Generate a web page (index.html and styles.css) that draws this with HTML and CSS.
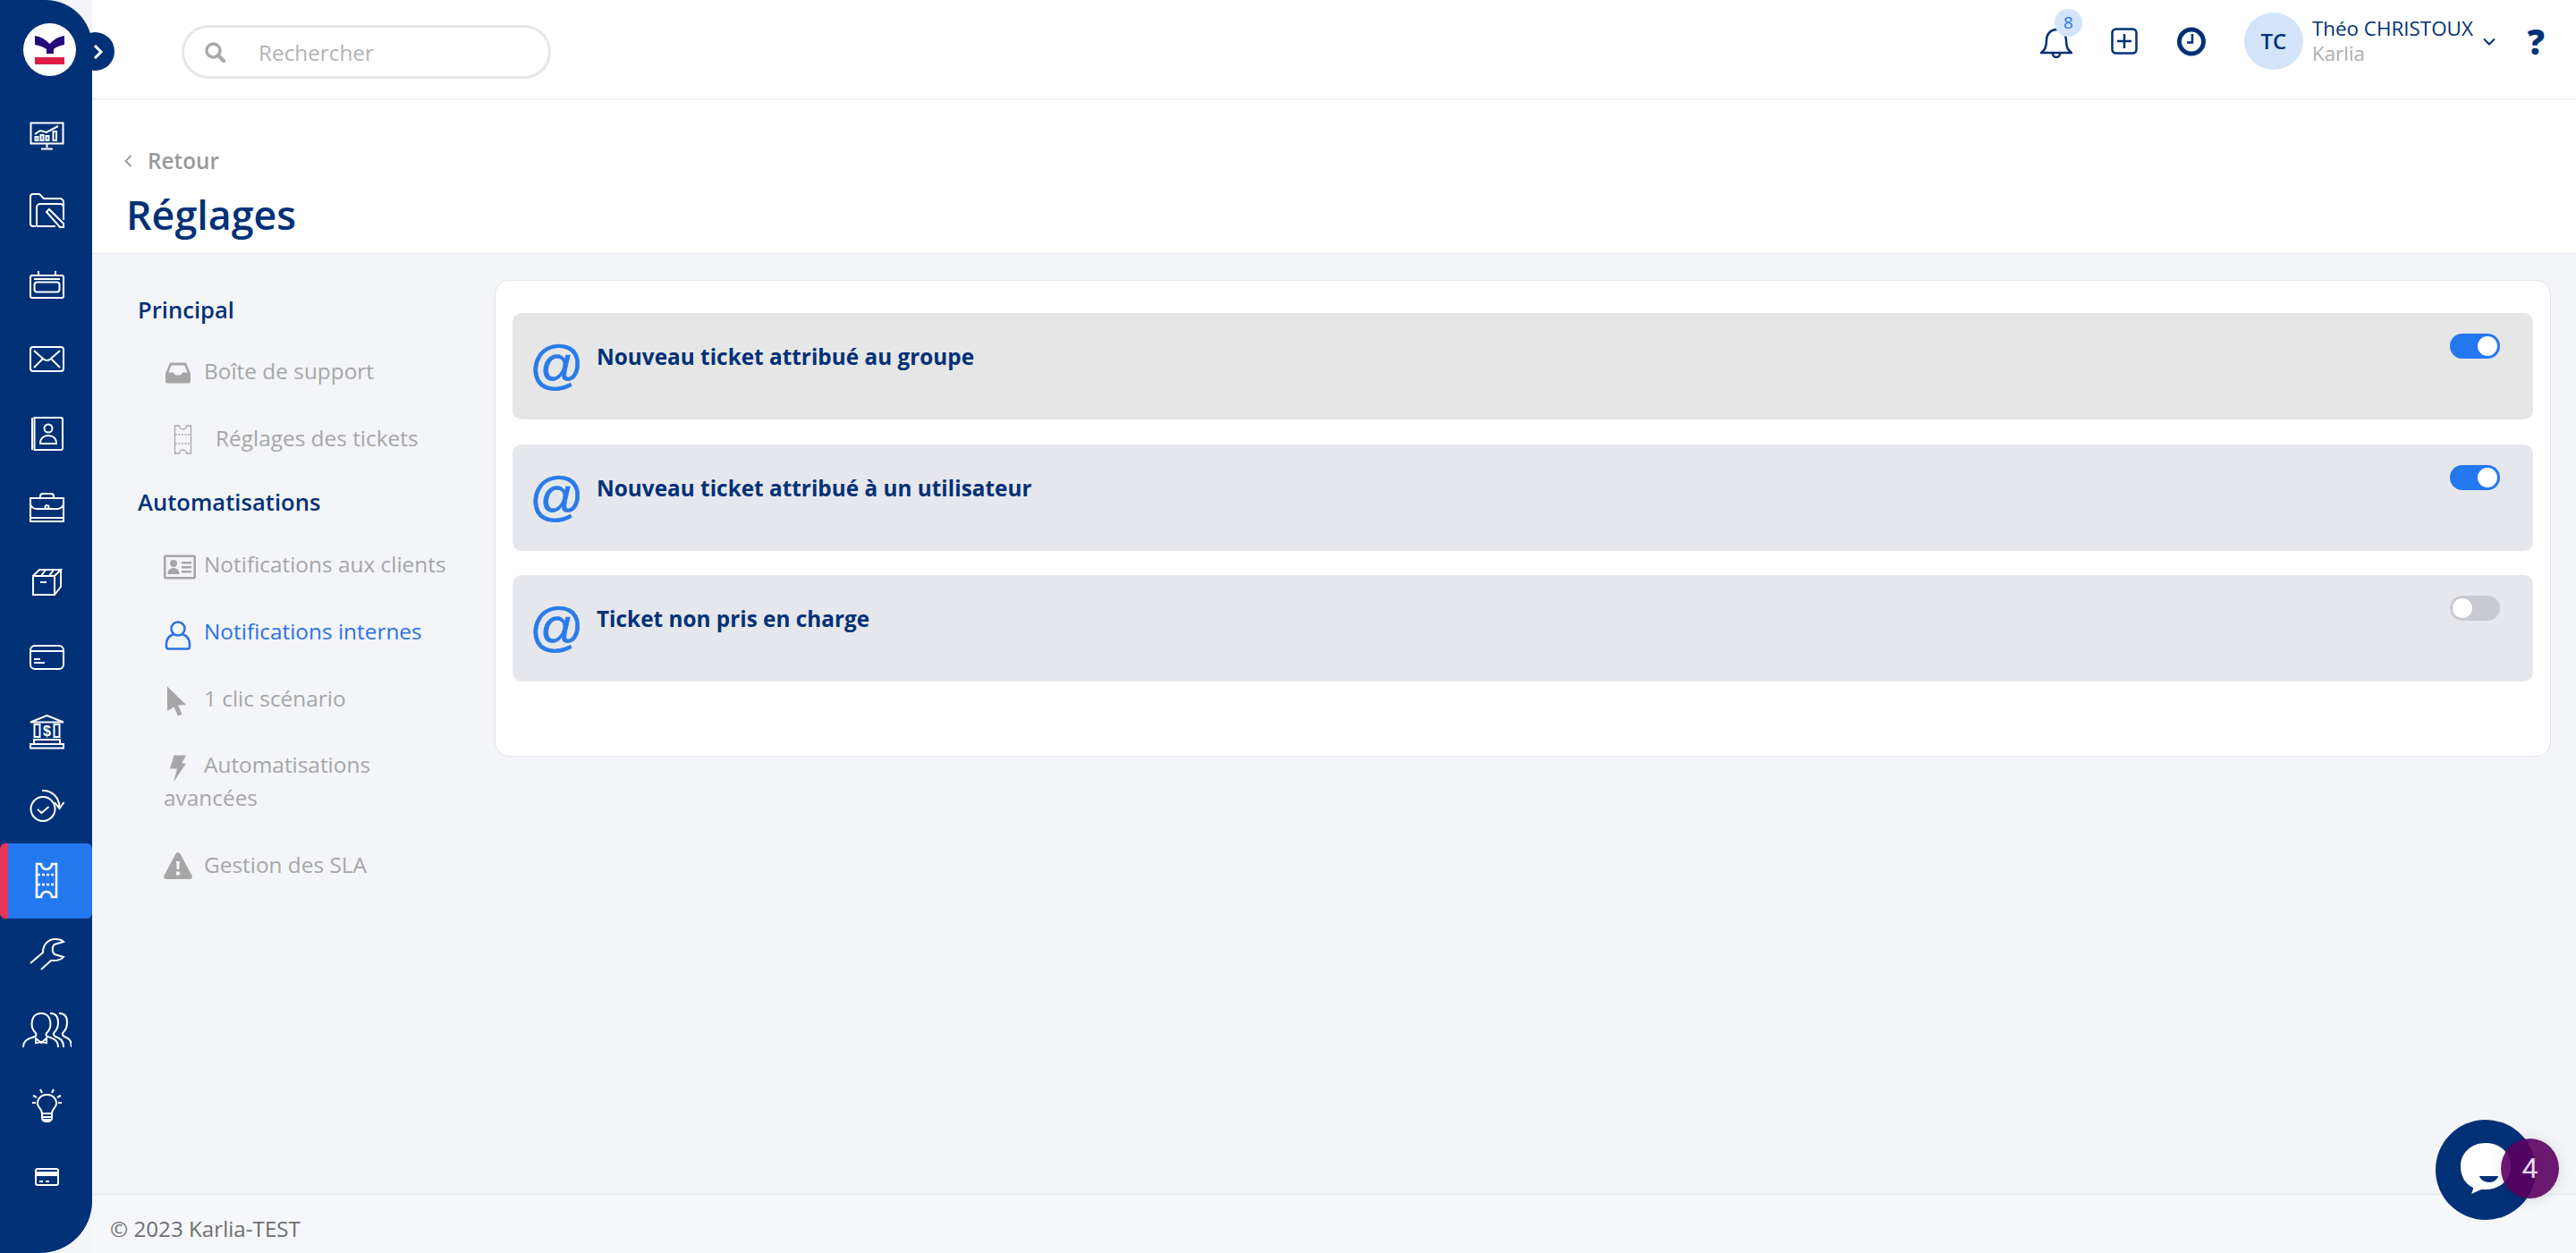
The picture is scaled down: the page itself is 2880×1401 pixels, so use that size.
FILE: index.html
```html
<!DOCTYPE html>
<html lang="fr">
<head>
  <meta charset="UTF-8">
  <title>Réglages</title>
  <link rel="stylesheet" href="styles.css">
</head>
<body>
  <div class="app">
    <!-- Main sidebar -->
    <aside class="sidebar">
      <div class="logo">
        <svg width="59" height="59" viewBox="0 0 59 59">
          <path fill="#24097c" d="M13 14 Q22 15 29.500 23 Q37 15 46 14 V24 Q37 26 34 29 V34 H26 V29 Q22 26 13 24 Z"/>
          <rect fill="#e01e45" x="13" y="38" width="33" height="8"/>
        </svg>
      </div>
      <nav class="side-nav">
        <a class="side-item" href="#"><svg class="side-icon" viewBox="0 0 56 44"><rect x="10.500" y="7.500" width="36" height="23"/><path d="M28.500 31v4M22 36.500h13M15 20l6-4 7 2 13-7"/><rect x="15.500" y="23" width="3" height="4"/><rect x="21.500" y="21" width="3" height="6"/><rect x="27.500" y="22" width="3" height="5"/><rect x="35.500" y="17" width="3.500" height="10"/></svg></a>
        <a class="side-item" href="#"><svg class="side-icon" viewBox="0 0 56 44"><path d="M16 40h-3a3 3 0 0 1-3-3V7a3 3 0 0 1 3-3h7l5 5h18a4 4 0 0 1 4 4v20"/><path d="M17 40H20M17 40V19a4 4 0 0 1 4-4h22a4 4 0 0 1 4 4v13M20 40h18"/><path d="M28 24l3-3 16 16v4h-4z"/></svg></a>
        <a class="side-item" href="#"><svg class="side-icon" viewBox="0 0 56 44"><rect x="10" y="12" width="37" height="25" rx="2"/><path d="M19 7v6M38 7v6M14 16h29"/><rect x="14.500" y="19.500" width="28" height="11" rx="3"/></svg></a>
        <a class="side-item" href="#"><svg class="side-icon" viewBox="0 0 56 44"><rect x="10" y="8" width="37" height="27" rx="3"/><path d="M14 12l10 9q4.500 4 9 0l10-9M14 31l10-10M43 31L33 21"/></svg></a>
        <a class="side-item" href="#"><svg class="side-icon" viewBox="0 0 56 44"><path d="M12 4v36M14.500 4H44a2 2 0 0 1 2 2v32a2 2 0 0 1-2 2H14.500z"/><circle cx="30" cy="16" r="4.500"/><path d="M21 33c0-6 4-9 9-9s9 3 9 9z"/></svg></a>
        <a class="side-item" href="#"><svg class="side-icon" viewBox="0 0 56 44"><rect x="10" y="11" width="37" height="26"/><path d="M21 11V9a3 3 0 0 1 3-3h9a3 3 0 0 1 3 3v2M10 18q2 5 7 5h23q5 0 7-5M10 33h37"/><circle cx="28.500" cy="21" r="2"/></svg></a>
        <a class="side-item" href="#"><svg class="side-icon" viewBox="0 0 56 44"><rect x="13" y="14" width="24" height="21"/><path d="M13 14l7-7h24l-7 7M44 7v19l-7 9M27 7l-5 7M36 7l-5 7M21 21h7"/></svg></a>
        <a class="side-item" href="#"><svg class="side-icon" viewBox="0 0 56 44"><rect x="10" y="9" width="37" height="26" rx="5"/><path d="M10 15h37M14 24h7M14 28h12"/></svg></a>
        <a class="side-item" href="#"><svg class="side-icon" viewBox="0 0 56 44"><path d="M10 11.500L28.500 4 47 11.500z"/><rect x="14.500" y="14" width="6" height="14"/><rect x="36.500" y="14" width="6" height="14"/><path d="M14 31h29v5H14zM10 36h37v4.500H10z"/><text class="bank-sign" x="28.500" y="27" text-anchor="middle">$</text></svg></a>
        <a class="side-item" href="#"><svg class="side-icon" viewBox="0 0 56 44"><circle cx="24" cy="24.500" r="13.500"/><path d="M18 25l4.500 4 8-7M23 4c10-1 19 7 19.500 18M37 17l5.500 7 5-7"/></svg></a>
        <a class="side-item side-item-active" href="#"><svg class="side-icon side-icon-bold" viewBox="0 0 56 44"><path d="M17 3h5a6 6 0 0 0 12 0h5v37h-5a6 6 0 0 0-12 0h-5z"/><path stroke-dasharray="3 2" d="M18 15h20M18 26h20"/></svg></a>
        <a class="side-item" href="#"><svg class="side-icon" viewBox="0 0 56 44"><path d="M10 31l14-12C24 10 30 4 38 4c4 0 7 1 9 3l-10 3c-3 2-3 9 0 11l10 3c-4 5-11 4-14 4L22 38"/></svg></a>
        <a class="side-item" href="#"><svg class="side-icon" viewBox="0 0 56 44"><path d="M2 41c0-8 6-10 13-12 2-1 2-3 0-5-3-3-4-8-3-13 1-5 5-8 10-8s9 3 10 8c1 5 0 10-3 13-2 2-2 4 0 5 7 2 12 4 12 12"/><path d="M16 31l6 5 6-5v5l-6-1-6 1zM32 3c6 0 9 4 9 10 0 5-2 9-4 11-2 2-1 4 1 5 5 2 9 4 9 12M42 3c6 0 9 4 9 10 0 5-2 9-4 11-2 2-1 4 1 5 5 2 8 4 8 12"/></svg></a>
        <a class="side-item" href="#"><svg class="side-icon" viewBox="0 0 56 44"><path d="M23 32c0-4-3-6-4-8-3-5 1-13 9.500-13S41 19 38 24c-1 2-4 4-4 8zM23 32v5q0 4 5.500 4T34 37v-5M23 36h11M24 39h9M21 5l2 4M36 5l-2 4M13 12l4 2M44 12l-4 2M12 20h4M41 20h4"/></svg></a>
        <a class="side-item" href="#"><svg class="side-icon" viewBox="0 0 56 44"><rect x="16" y="11" width="25" height="18" rx="2"/><rect class="side-fill" x="16" y="15" width="25" height="3"/><path d="M20 25h4M27 25h4"/></svg></a>
      </nav>
    </aside>
    <button class="side-toggle" type="button">
      <svg width="12" height="18" viewBox="0 0 12 18"><path d="M2 2l7 7-7 7" fill="none" stroke="#fff" stroke-width="3"/></svg>
    </button>

    <div class="main">
      <!-- Top bar -->
      <header class="topbar">
        <div class="search">
          <svg class="search-icon" width="23" height="23" viewBox="0 0 23 23"><circle cx="9.500" cy="9.500" r="7.500" fill="none" stroke="#aaa" stroke-width="3.500"/><path d="M15 15l6 6" stroke="#aaa" stroke-width="4.500" stroke-linecap="round"/></svg>
          <span class="search-text">Rechercher</span>
        </div>
        <div class="top-actions">
          <div class="bell">
            <svg width="36" height="36" viewBox="0 0 36 36" fill="none" stroke="#003177" stroke-width="2.500"><path d="M1 30h34c-4-3-6-6-6-14 0-7-5-12-11-12S7 9 7 16c0 8-2 11-6 14z" stroke-linejoin="round"/><path d="M14 31a4 4 0 0 0 8 0" /></svg>
            <span class="bell-count">8</span>
          </div>
          <svg class="top-plus" width="30" height="30" viewBox="0 0 30 30" fill="none" stroke="#003177" stroke-width="2.500"><rect x="1.500" y="1.500" width="27" height="27" rx="4"/><path d="M15 7v16M7 15h16"/></svg>
          <svg class="top-clock" width="32" height="33" viewBox="0 0 32 33" fill="none" stroke="#003177"><circle cx="16" cy="16.500" r="13.500" stroke-width="5"/><path d="M17 8v9.500h-6" stroke-width="2.500"/></svg>
          <div class="avatar">TC</div>
          <div class="user">
            <div class="user-name">Théo CHRISTOUX</div>
            <div class="user-org">Karlia</div>
          </div>
          <svg class="user-caret" width="14" height="9" viewBox="0 0 14 9"><path d="M1 1.500l6 6 6-6" fill="none" stroke="#003177" stroke-width="2"/></svg>
          <span class="help">?</span>
        </div>
      </header>

      <!-- Page title -->
      <div class="page-head">
        <a class="back-link" href="#">
          <svg width="9" height="14" viewBox="0 0 9 14"><path d="M7.500 1L1.500 7l6 6" fill="none" stroke="#999" stroke-width="1.800"/></svg>
          Retour
        </a>
        <h1 class="page-title">Réglages</h1>
      </div>

      <div class="content">
        <!-- Settings menu -->
        <nav class="settings-nav">
          <h3 class="settings-group">Principal</h3>
          <a class="settings-link" href="#"><svg class="settings-icon" viewBox="0 0 36 34"><path fill-rule="evenodd" d="M7 5.500h18l5 12v9a2 2 0 0 1-2 2H4a2 2 0 0 1-2-2v-9zM8.500 8.500l-3 8H11l2 3h6l2-3h5.500l-3-8z"/></svg>Boîte de support</a>
          <a class="settings-link settings-link-wide" href="#"><svg class="settings-icon settings-icon-line" viewBox="0 0 36 34"><path d="M12.500 1h5a4 4 0 0 0 8 0h5v31h-5a4 4 0 0 0-8 0h-5z"/><path stroke-dasharray="2 1.500" d="M13 11h17M13 21h17"/></svg>Réglages des tickets</a>

          <h3 class="settings-group">Automatisations</h3>
          <a class="settings-link" href="#"><svg class="settings-icon" viewBox="0 0 36 34"><path fill-rule="evenodd" d="M2 3.500h32a2 2 0 0 1 2 2v23a2 2 0 0 1-2 2H2a2 2 0 0 1-2-2v-23a2 2 0 0 1 2-2zM2.500 6v22h31V6z"/><circle cx="11" cy="13" r="4"/><path d="M4.500 25c0-5 3-7 6.500-7s6.500 2 6.500 7zM20 11h11v2.500H20zM20 16h11v2.500H20zM20 21h11v2.500H20z"/></svg>Notifications aux clients</a>
          <a class="settings-link settings-link-active" href="#"><svg class="settings-icon settings-icon-user" viewBox="0 0 36 34"><circle cx="16" cy="11" r="7.500"/><path d="M11 17C6 19 3 23 3 28v3a2.500 2.500 0 0 0 2.500 2.500h21A2.500 2.500 0 0 0 29 31v-3c0-5-3-9-8-11"/></svg>Notifications internes</a>
          <a class="settings-link" href="#"><svg class="settings-icon" viewBox="0 0 36 34"><path d="M4 1.500l21 20.500-9 .5 4.500 10-4.500 2-4.500-10L4 29z"/></svg>1 clic scénario</a>
          <a class="settings-link" href="#"><svg class="settings-icon" viewBox="0 0 36 34"><path d="M11.500 3.500H25l-5 9h5L11 33.500l4-15H7z"/></svg>Automatisations avancées</a>
          <a class="settings-link" href="#"><svg class="settings-icon" viewBox="0 0 36 34"><path fill-rule="evenodd" d="M13.500 1.500a3 3 0 0 1 5 0l13 24.500a2.500 2.500 0 0 1-2 4H2.500a2.500 2.500 0 0 1-2-4zM14 10l.7 9h2.600l.7-9zM14 21.500v4h4v-4z"/></svg>Gestion des SLA</a>
        </nav>

        <!-- Internal notifications -->
        <section class="card">
          <div class="notif notif-hover">
            <span class="notif-at">@</span>
            <span class="notif-title">Nouveau ticket attribué au groupe</span>
            <span class="switch switch-on"></span>
          </div>
          <div class="notif">
            <span class="notif-at">@</span>
            <span class="notif-title">Nouveau ticket attribué à un utilisateur</span>
            <span class="switch switch-on"></span>
          </div>
          <div class="notif">
            <span class="notif-at">@</span>
            <span class="notif-title">Ticket non pris en charge</span>
            <span class="switch"></span>
          </div>
        </section>
      </div>

      <footer class="footer">© 2023 Karlia-TEST</footer>
    </div>

    <!-- Chat widget -->
    <div class="chat">
      <svg width="64" height="62" viewBox="0 0 64 62"><path fill="#fff" d="M30 2c16 0 28 11 28 26S46 54 30 54c-2 0-4 0-5 0L14 59c1-2 2-5 2-7C7 48 2 39 2 28 2 13 14 2 30 2z"/><path fill="#003177" d="M23 39h21c-1 4-5 7-10 7s-10-3-11-7z"/></svg>
    </div>
    <div class="chat-count">4</div>
  </div>
</body>
</html>
```

FILE: styles.css
```css
* {
  box-sizing: border-box;
}

body {
  margin: 0;
  font-family: "Open Sans", sans-serif;
  background-color: #f4f5f9;
  color: #003177;
}

a {
  text-decoration: none;
  color: inherit;
}

.app {
  position: relative;
  display: flex;
  height: 100vh;
  overflow: hidden;
}

/* Sidebar */
.sidebar {
  position: relative;
  flex: 0 0 103px;
  padding-top: 110px;
  background-color: #003177;
  border-radius: 0 52px 58px 0;
}

.logo {
  position: absolute;
  top: 26px;
  left: 26px;
  width: 59px;
  height: 59px;
  border-radius: 50%;
  background-color: #fff;
}

.logo svg {
  display: block;
}

.side-toggle {
  position: absolute;
  top: 36px;
  left: 85px;
  display: flex;
  align-items: center;
  justify-content: flex-end;
  width: 43px;
  height: 43px;
  padding: 0 12px 0 0;
  border: 0;
  border-radius: 50%;
  background-color: #003177;
}

.side-nav {
  display: flex;
  flex-direction: column;
}

.side-item {
  display: flex;
  align-items: center;
  padding-left: 24px;
  height: 83.33px;
}

.side-icon {
  width: 56px;
  height: 44px;
  fill: none;
  stroke: #fff;
  stroke-width: 2;
}

.side-icon-bold {
  stroke-width: 2.500;
}

.side-fill {
  fill: #fff;
}

.bank-sign {
  fill: #fff;
  stroke: none;
  font-family: "Liberation Sans", sans-serif;
  font-size: 16px;
  font-weight: 700;
}

.side-item-active {
  border-left: 9px solid #e8365d;
  padding-left: 15px;
  border-radius: 6px;
  background-color: #2478ef;
}

/* Main column */
.main {
  display: flex;
  flex: 1;
  flex-direction: column;
  min-width: 0;
}

.topbar {
  display: flex;
  flex: 0 0 111px;
  align-items: center;
  padding: 0 35px 18px 100px;
  border-bottom: 1px solid #e8e9ee;
  background-color: #fff;
}

.search {
  display: flex;
  align-items: center;
  align-self: flex-start;
  width: 413px;
  height: 60px;
  margin-top: 28px;
  padding-left: 23px;
  border: 3px solid #e6e6e6;
  border-radius: 30px;
  background-color: #fff;
}

.search-text {
  margin-left: 37px;
  font-size: 24.300px;
  color: #b3b3b3;
}

.top-actions {
  display: flex;
  align-items: center;
  margin-left: auto;
}

.bell {
  position: relative;
  display: flex;
  width: 36px;
  height: 36px;
  margin-top: 2px;
}

.bell-count {
  position: absolute;
  top: -19px;
  left: 16px;
  width: 31px;
  height: 31px;
  border-radius: 50%;
  background-color: #d3e4fa;
  font-size: 19px;
  line-height: 31px;
  text-align: center;
  color: #2478ef;
}

.top-plus {
  margin-left: 43px;
}

.top-clock {
  margin-left: 44px;
}

.avatar {
  width: 66px;
  height: 64px;
  margin-left: 43px;
  border-radius: 50%;
  background-color: #d3e4fa;
  font-size: 24px;
  font-weight: 600;
  line-height: 64px;
  text-align: center;
}

.user {
  margin-left: 10px;
  font-size: 22.400px;
  line-height: 28px;
  white-space: nowrap;
}

.user-org {
  color: #adadad;
}

.user-caret {
  margin-left: 11px;
}

.help {
  margin-left: 36px;
  font-size: 38px;
  font-weight: 800;
  line-height: 40px;
}

.page-head {
  flex: 0 0 173px;
  padding: 51px 0 0 36px;
  border-bottom: 1px solid #e8e9ee;
  background-color: #fff;
}

.back-link {
  display: flex;
  align-items: center;
  gap: 17px;
  font-size: 24.300px;
  font-weight: 600;
  line-height: 36px;
  color: #999;
}

.page-title {
  margin: 12px 0 0 2px;
  font-size: 44.800px;
  font-weight: 600;
  line-height: 60px;
}

.content {
  display: flex;
  flex: 1;
  align-items: flex-start;
  min-height: 0;
  padding: 29px 28px 0 0;
}

/* Settings menu */
.settings-nav {
  flex: 0 0 450px;
  padding: 15px 40px 0 51px;
}

.settings-group {
  margin: 17px 0 13px;
  font-size: 25.600px;
  font-weight: 600;
  line-height: 37px;
}

.settings-group:first-child {
  margin-top: 0;
  margin-bottom: 12px;
}

.settings-link {
  display: block;
  margin-left: 29px;
  padding: 19px 0 18.700px;
  font-size: 24.400px;
  line-height: 37px;
  color: #a6a6a6;
}

.settings-icon {
  width: 36px;
  height: 34px;
  margin: -2px 9px -2px 0;
  vertical-align: middle;
  overflow: visible;
  fill: #a6a6a6;
}

.settings-link-wide .settings-icon {
  margin-right: 22px;
}

.settings-icon-line {
  fill: none;
  stroke: #a6a6a6;
  stroke-width: 1.300;
}

.settings-link-active {
  color: #2a72e5;
}

.settings-icon-user {
  fill: none;
  stroke: #2a72e5;
  stroke-width: 2.500;
}

/* Card */
.card {
  flex: 1;
  height: 533px;
  padding: 36px 19px 0;
  border: 1px solid #e4e5ea;
  border-radius: 16px;
  background-color: #fff;
}

.notif {
  display: flex;
  height: 119px;
  margin-bottom: 27px;
  padding: 0 37px 0 19px;
  border-radius: 10px;
  background-color: #e6e7ec;
}

.notif-hover {
  margin-bottom: 28px;
  background-color: #e6e6e6;
}

.notif-at {
  width: 75px;
  margin-top: 26px;
  font-family: "Liberation Sans", sans-serif;
  font-size: 60px;
  line-height: 64px;
  color: #2a7be9;
  -webkit-text-stroke: 0.7px #2a7be9;
}

.notif-title {
  margin-top: 32px;
  font-size: 24.350px;
  font-weight: 700;
  line-height: 33px;
}

.switch {
  position: relative;
  width: 56px;
  height: 28px;
  margin: 23px 0 0 auto;
  border-radius: 14px;
  background-color: #c9cacf;
}

.switch::after {
  content: "";
  position: absolute;
  top: 3px;
  left: 3px;
  width: 22px;
  height: 22px;
  border-radius: 50%;
  background-color: #fff;
}

.switch-on {
  background-color: #2478ef;
}

.switch-on::after {
  left: 31px;
}

.footer {
  flex: 0 0 66px;
  padding: 21px 0 0 20px;
  border-top: 1px solid #e6e7ec;
  background-color: #f6f7fa;
  font-size: 24.200px;
  line-height: 33px;
  color: #6f6f6f;
}

/* Chat widget */
.chat {
  position: absolute;
  top: 1252px;
  left: 2723px;
  display: flex;
  align-items: center;
  justify-content: center;
  width: 112px;
  height: 112px;
  padding: 0 0 2px 4px;
  border-radius: 50%;
  background-color: #003177;
}

.chat-count {
  position: absolute;
  top: 1273px;
  left: 2796px;
  width: 65px;
  height: 67px;
  border-radius: 50%;
  background-color: rgba(91, 0, 97, 0.9);
  box-shadow: 0 2px 16px rgba(0, 0, 0, 0.12);
  font-family: Roboto, sans-serif;
  font-size: 32px;
  line-height: 67px;
  text-align: center;
  color: #eadcf0;
}
```
